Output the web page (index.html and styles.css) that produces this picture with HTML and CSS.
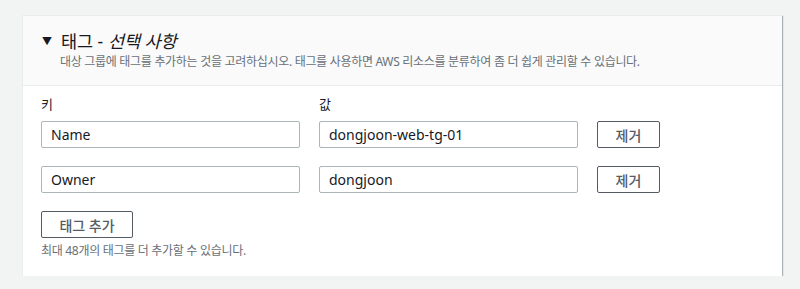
FILE: index.html
```html
<!DOCTYPE html>
<html lang="ko">
  <head>
    <meta charset="UTF-8" />
    <meta name="viewport" content="width=device-width, initial-scale=1.0" />
    <title>태그</title>
    <link rel="stylesheet" href="styles.css">
  </head>
  <body>
    <div class="panel">
      <div class="panel-header">
        <h2 class="title">
          <span class="caret">&#9660;</span>
          태그 - <i>선택 사항</i>
        </h2>
        <p class="desc">
          대상 그룹에 태그를 추가하는 것을 고려하십시오. 태그를 사용하면 AWS 리소스를 분류하여 좀 더 쉽게 관리할 수 있습니다.
        </p>
      </div>
      <div class="panel-body">
        <div class="row labels">
          <label class="field">키</label>
          <label class="field">값</label>
        </div>
        <div class="row">
          <input class="field input" type="text" value="Name" />
          <input class="field input" type="text" value="dongjoon-web-tg-01" />
          <button class="btn btn-remove">제거</button>
        </div>
        <div class="row">
          <input class="field input" type="text" value="Owner" />
          <input class="field input" type="text" value="dongjoon" />
          <button class="btn btn-remove">제거</button>
        </div>
        <button class="btn btn-add">태그 추가</button>
        <p class="hint">최대 48개의 태그를 더 추가할 수 있습니다.</p>
      </div>
    </div>
  </body>
</html>
```

FILE: styles.css
```css
body {
  margin: 0;
  padding: 15px 0 0 22px;
  background: #f2f3f3;
  font-family: "Noto Sans", "Noto Sans CJK KR", sans-serif;
  color: #16191f;
}
.panel {
  width: 760px;
  height: 261px;
  background: #fff;
  border-top: 1px solid #eaeded;
  border-left: 1px solid #eaeded;
  box-shadow: 1px 1px 1px 0 rgba(0, 28, 36, 0.3);
  box-sizing: border-box;
}
.panel-header {
  background: #fafafa;
  border-bottom: 1px solid #eaeded;
  height: 70px;
  box-sizing: border-box;
  padding: 13px 19px 0 18px;
}
.title {
  margin: 0;
  font-size: 17.5px;
  font-weight: 400;
  line-height: 24px;
  display: flex;
  align-items: center;
  letter-spacing: -0.1px;
}
.title i {
  margin-left: 5px;
}
.caret {
  font-size: 10px;
  width: 19px;
  display: inline-block;
  padding-left: 1px;
}
.desc {
  margin: 0 0 0 19px;
  font-size: 12px;
  line-height: 18px;
  color: #687078;
  letter-spacing: -0.3px;
}
.panel-body {
  padding: 9px 19px 0 18px;
}
.row {
  display: flex;
  gap: 19px;
  margin-bottom: 18px;
}
.row.labels {
  margin-bottom: 8px;
  font-size: 13px;
  line-height: 18px;
}
.field {
  width: 259px;
  flex: none;
}
.input {
  height: 27px;
  box-sizing: border-box;
  border: 1px solid #aab7b8;
  border-radius: 2px;
  padding: 0 9px;
  font-family: inherit;
  font-size: 14px;
  color: #16191f;
  background: #fff;
}
.btn {
  background: #fff;
  border: 1px solid #545b64;
  border-radius: 2px;
  color: #545b64;
  font-family: inherit;
  font-weight: 500;
  font-size: 14px;
  height: 27px;
  padding: 0;
  box-sizing: border-box;
}
.btn-remove {
  width: 63px;
}
.btn-add {
  width: 92px;
  margin-top: 2px;
  display: block;
}
.hint {
  margin: 4px 0 0;
  font-size: 12px;
  line-height: 18px;
  color: #687078;
  letter-spacing: -0.3px;
}
```
